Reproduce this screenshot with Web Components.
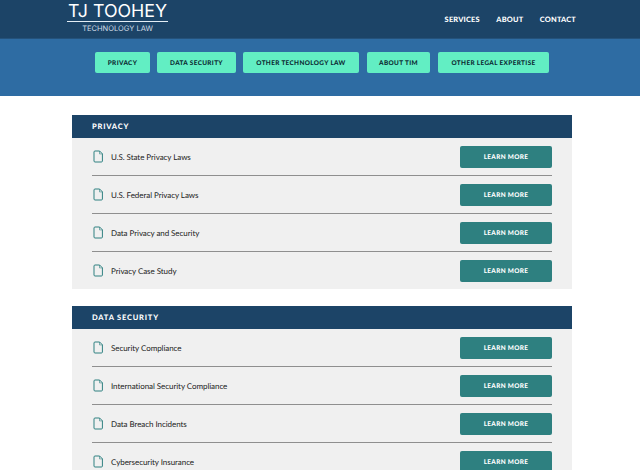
<!DOCTYPE html>
<html><head><meta charset="utf-8"><style>
html,body{margin:0;padding:0;background:#fff;height:470px;overflow:hidden;font-family:Lato,sans-serif;text-rendering:geometricPrecision}
</style></head><body>
<site-header></site-header>
<sub-nav><nav-chip style="width:55px">PRIVACY</nav-chip><nav-chip style="width:79px">DATA SECURITY</nav-chip><nav-chip style="width:116px">OTHER TECHNOLOGY LAW</nav-chip><nav-chip style="width:63px;margin-left:1px">ABOUT TIM</nav-chip><nav-chip style="width:111px;margin-left:1px">OTHER LEGAL EXPERTISE</nav-chip></sub-nav>
<page-main>
<topic-panel title="PRIVACY"><topic-row>U.S. State Privacy Laws</topic-row><topic-row>U.S. Federal Privacy Laws</topic-row><topic-row>Data Privacy and Security</topic-row><topic-row last>Privacy Case Study</topic-row></topic-panel>
<topic-panel title="DATA SECURITY"><topic-row>Security Compliance</topic-row><topic-row>International Security Compliance</topic-row><topic-row>Data Breach Incidents</topic-row><topic-row last>Cybersecurity Insurance</topic-row></topic-panel>
</page-main>
<script>
function def(n,html,init){customElements.define(n,class extends HTMLElement{connectedCallback(){if(this.shadowRoot)return;const s=this.attachShadow({mode:'open'});s.innerHTML=typeof html==='function'?html(this):html;}});}
def('site-header',`<style>
:host{display:flex;height:39px;box-sizing:border-box;background:#1c4467;padding:0 64px 0 67px;justify-content:space-between;align-items:flex-start;border-bottom:1px solid #24527b}
.logo{width:101px;color:#fff;text-align:center;padding-top:3px}
.t{font:400 17.8px/18px Inter,sans-serif;border-bottom:1.5px solid #e4eef6;white-space:nowrap}
.s{font:400 7.5px/10px Inter,sans-serif;color:#d0dce6;margin-top:2px;white-space:nowrap}
nav{display:flex;gap:16.5px;padding-top:14px;font:900 7.4px/11px Lato,sans-serif;letter-spacing:.2px;color:#fff}
</style><div class="logo"><div class="t">TJ TOOHEY</div><div class="s">TECHNOLOGY LAW</div></div><nav><span>SERVICES</span><span>ABOUT</span><span>CONTACT</span></nav>`);
def('sub-nav',`<style>
:host{display:flex;height:57px;box-sizing:border-box;background:#2e6ca3;padding:13px 0 0 95px;gap:7px;align-items:flex-start}
</style><slot></slot>`);
def('nav-chip',`<style>
:host{display:flex;height:21px;box-sizing:border-box;padding-top:3px;align-items:center;justify-content:center;background:#62eec3;border-radius:2px;color:#0d2c33;font:900 6.4px/1 Lato,sans-serif;letter-spacing:.36px;white-space:nowrap}
</style><slot></slot>`);
def('page-main',`<style>
:host{display:flex;flex-direction:column;gap:17px;padding:19px 68px 0 72px}
</style><slot></slot>`);
def('topic-panel',e=>`<style>
:host{display:block;background:#f0f0f0}
h2{margin:0;height:23px;box-sizing:border-box;background:#1c4467;color:#fff;padding:0 20px;font:900 7.5px/24px Lato,sans-serif;letter-spacing:.8px}
.b{padding:0 20px 0}
</style><h2>${e.getAttribute('title')}</h2><div class="b"><slot></slot></div>`);
def('topic-row',e=>`<style>
:host{display:flex;height:${e.hasAttribute('last')?37:38}px;box-sizing:border-box;align-items:flex-start;padding-top:8px;${e.hasAttribute('last')?'':'border-bottom:1px solid #8f8f8f;'}}
svg{width:10px;height:13px;margin:4px 8px 0 1px;flex:none}
span{flex:1;font:400 8px/22px Lato,sans-serif;letter-spacing:-.06px;color:#1c1c1c}
a{width:92px;height:22px;background:#2e8080;border-radius:2px;color:#fff;font:900 6.4px/24px Lato,sans-serif;letter-spacing:.35px;text-align:center}
</style><svg viewBox="0 0 10 13" fill="none" stroke="#2e8080" stroke-width="1"><path d="M1 2a1 1 0 0 1 1-1h4.6L9.400 3.800V11a1 1 0 0 1-1 1H2a1 1 0 0 1-1-1z"/><path d="M6.500 1v2.900h2.900" stroke-width=".6"/></svg><span><slot></slot></span><a>LEARN MORE</a>`);
</script>
</body></html>
